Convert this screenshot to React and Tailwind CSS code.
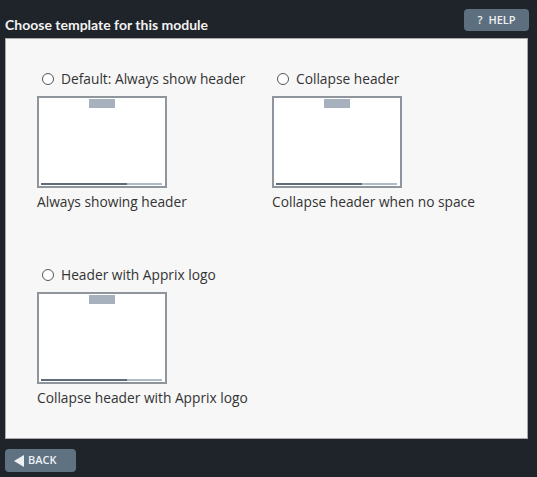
import React from "react";

const templates = [
  { label: "Default: Always show header", caption: "Always showing header" },
  { label: "Collapse header", caption: "Collapse header when no space" },
  { label: "Header with Apprix logo", caption: "Collapse header with Apprix logo" },
];

// Small preview of the page template
function Preview() {
  return (
    <div className="w-[130px] h-[92px] border-2 border-[#8f959c] bg-white flex flex-col justify-between items-center pt-px pb-[1px]">
      <div className="w-[26px] h-[9px] bg-[#a7b1bd]" />
      <div className="flex w-full pl-[2px] pr-[3px] h-[2px]">
        <div className="w-[86px] bg-[#5f6b78]" />
        <div className="flex-1 bg-[#aebbc7]" />
      </div>
    </div>
  );
}

function TemplateOption({ label, caption }) {
  return (
    <div className="flex flex-col">
      <label className="flex items-center h-[20px] pl-[5px] gap-[7px] cursor-pointer">
        <span className="w-[12px] h-[12px] rounded-full border border-[#555] bg-white" />
        <span>{label}</span>
      </label>
      <div className="mt-[7px]">
        <Preview />
      </div>
      <div className="mt-[4px] h-[20px] leading-[20px]">{caption}</div>
    </div>
  );
}

export default function App() {
  return (
    <div
      className="w-[537px] h-[477px] bg-[#1f232a] flex flex-col px-[5px] pr-[9px]"
      style={{ fontFamily: "'Open Sans', 'Noto Sans', sans-serif" }}
    >
      <div className="flex justify-between items-end h-[38px] pb-[4px]">
        <h1
          className="text-[14px] font-bold text-[#f2f2f2] leading-[18px]"
          style={{ fontFamily: "Lato, 'Open Sans', sans-serif" }}
        >
          Choose template for this module
        </h1>
        <button className="mb-[3px] mr-[-1px] w-[65px] h-[22px] rounded-[4px] bg-[#5d6f7e] text-[#eef1f4] text-[11px] font-semibold flex items-center justify-center gap-[6px]">
          <span>?</span>
          <span>HELP</span>
        </button>
      </div>

      <div className="h-[401px] bg-[#f7f7f7] border border-[#a9a9a9] pt-[30px] pl-[31px] text-[13.75px] text-[#333] leading-[20px]">
        <div className="grid grid-cols-[235px_235px] gap-y-[53px]">
          {templates.map((t) => (
            <TemplateOption key={t.label} label={t.label} caption={t.caption} />
          ))}
        </div>
      </div>

      <div className="mt-[10px]">
        <button className="w-[71px] h-[23px] rounded-[4px] bg-[#5f7282] text-[#eef1f4] text-[11px] font-semibold flex items-center pl-[9px] gap-[4px]">
          <svg width="10" height="12" viewBox="0 0 10 12">
            <path d="M10 0 L0 6 L10 12 Z" fill="#eef1f4" />
          </svg>
          <span>BACK</span>
        </button>
      </div>
    </div>
  );
}
